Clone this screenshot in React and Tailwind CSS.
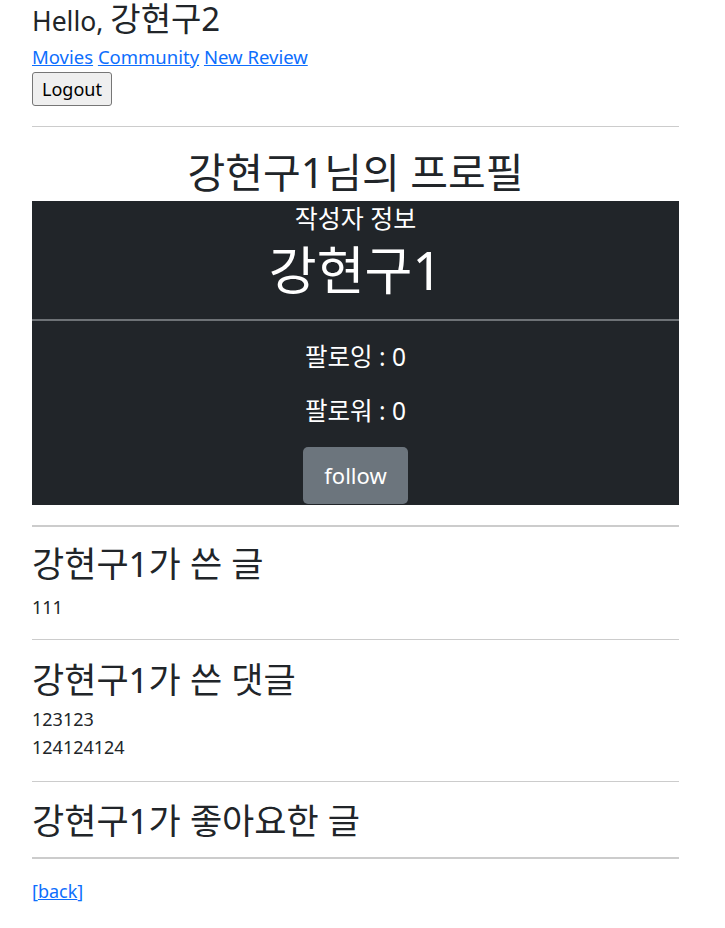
export default function App() {
  const font = { fontFamily: '"Noto Sans", "Noto Sans CJK KR", sans-serif' };
  return (
    <div className="bg-white text-[#212529] min-h-[928px]" style={font}>
      <div className="ml-[32px] w-[647px] flex flex-col">
        <div className="h-[38px] leading-[38px] text-[26.5px] whitespace-nowrap">
          Hello, <span className="text-[33px]">강현구2</span>
        </div>
        <div className="mt-[7px] h-[24px] leading-[24px] text-[18.5px] whitespace-nowrap">
          <a href="#" className="text-[#0d6efd] underline">Movies</a>{" "}
          <a href="#" className="text-[#0d6efd] underline">Community</a>{" "}
          <a href="#" className="text-[#0d6efd] underline">New Review</a>
        </div>
        <div className="mt-[3px]">
          <button className="h-[34px] w-[80px] bg-[#efefef] border border-[#767676] rounded-[3px] text-[18px] text-black leading-none">
            Logout
          </button>
        </div>
        <div className="mt-[20px] h-px bg-[#cccccc]" />
        <h1 className="mt-[23px] h-[44px] leading-[44px] text-[41px] text-center whitespace-nowrap">
          강현구1님의 프로필
        </h1>
        <div className="mt-[7px] bg-[#212529] text-white flex flex-col items-center h-[304px]">
          <div className="mt-[2px] h-[30px] leading-[30px] text-[25px] whitespace-nowrap">작성자 정보</div>
          <div className="mt-[7px] h-[60px] leading-[60px] text-[52px] whitespace-nowrap">강현구1</div>
          <div className="mt-[19px] h-[2px] w-full bg-[#6e7276]" />
          <div className="mt-[21px] h-[30px] leading-[30px] text-[24.5px] whitespace-nowrap">팔로잉 : 0</div>
          <div className="mt-[24px] h-[30px] leading-[30px] text-[24.5px] whitespace-nowrap">팔로워 : 0</div>
          <button className="mt-[21px] h-[57px] w-[105px] bg-[#6c757d] rounded-[5px] text-[22px] text-white">
            follow
          </button>
        </div>
        <div className="mt-[20px] h-[2px] bg-[#cccccc]" />
        <h3 className="mt-[17px] h-[40px] leading-[40px] text-[35px] whitespace-nowrap">강현구1가 쓴 글</h3>
        <div className="mt-[11px] h-[24px] leading-[24px] text-[18px]">111</div>
        <div className="mt-[20px] h-px bg-[#cccccc]" />
        <h3 className="mt-[20px] h-[40px] leading-[40px] text-[35px] whitespace-nowrap">강현구1가 쓴 댓글</h3>
        <div className="mt-[5px] flex flex-col text-[18px]">
          <div className="h-[28px] leading-[28px]">123123</div>
          <div className="h-[28px] leading-[28px]">124124124</div>
        </div>
        <div className="mt-[20px] h-px bg-[#cccccc]" />
        <h3 className="mt-[19px] h-[40px] leading-[40px] text-[35px] whitespace-nowrap">강현구1가 좋아요한 글</h3>
        <div className="mt-[16px] h-[2px] bg-[#cccccc]" />
        <div className="mt-[20px] h-[24px] leading-[24px] text-[18px]">
          <a href="#" className="text-[#0d6efd]">
            [<span className="underline">back</span>]
          </a>
        </div>
      </div>
    </div>
  );
}
